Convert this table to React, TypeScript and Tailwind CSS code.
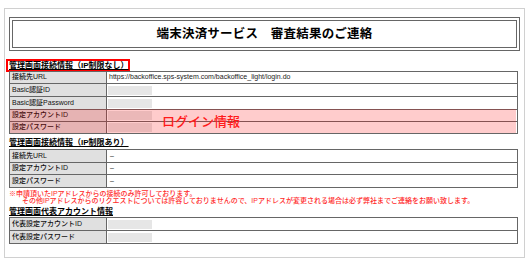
import React from "react"
import clsx from "clsx"

const font = { fontFamily: '"Liberation Sans", "Noto Sans CJK JP", sans-serif' }

const Blank = () => <div className="w-[44px] h-[9px] bg-[#e6e6e6]" />

type RowProps = { label: string; h: string; last?: boolean; children?: React.ReactNode }

const Row = ({ label, h, last, children }: RowProps) => (
  <div className={clsx("flex", h, !last && "border-b border-[#666]")}>
    <div className="w-[97px] shrink-0 bg-[#e0e0e0] border-r border-[#666] pl-[2px] flex items-center text-[7px] font-medium text-[#111]">
      {label}
    </div>
    <div className="flex-1 flex items-center pl-[1px] text-[7px] text-[#222]">{children}</div>
  </div>
)

const Heading = ({ children, className }: { children: React.ReactNode; className?: string }) => (
  <div className={clsx("text-[8px] font-bold text-black underline leading-none flex items-center", className)}>
    {children}
  </div>
)

export default function App() {
  return (
    <div className="w-[532px] h-[261px] bg-white pt-[8px] pl-[4px]" style={font}>
      <div className="w-[521px] h-[250px] border border-[#d0d0d0] px-[4px]">
        <div className="mt-[8px] w-[511px] h-[34px] border-[4px] border-double border-[#666] flex items-center justify-center">
          <span className="text-[12.5px] font-bold text-black tracking-[0.2px]">端末決済サービス　審査結果のご連絡</span>
        </div>

        <div className="mt-[8px] -ml-[3px] w-[124px] h-[13px] border-2 border-[#ff0000] pl-[1px] flex items-center">
          <Heading>管理画面接続情報（IP制限なし）</Heading>
        </div>

        <div className="relative -mt-[1px] w-[509px] border border-[#666]">
          <Row label="接続先URL" h="h-[12px]">
            <span className="pl-[1px]">https://backoffice.sps-system.com/backoffice_light/login.do</span>
          </Row>
          <Row label="Basic認証ID" h="h-[13px]">
            <Blank />
          </Row>
          <Row label="Basic認証Password" h="h-[13px]">
            <Blank />
          </Row>
          <Row label="設定アカウントID" h="h-[12px]">
            <Blank />
          </Row>
          <Row label="設定パスワード" h="h-[11px]" last>
            <Blank />
          </Row>
          <div className="absolute left-0 right-[1px] top-[37px] h-[24px] bg-[#ff0000]/20 flex items-center">
            <span className="ml-[152px] text-[13px] font-medium text-[#ff1a1a] leading-none">ログイン情報</span>
          </div>
        </div>

        <Heading className="mt-[3px] h-[12px]">管理画面接続情報（IP制限あり）</Heading>

        <div className="w-[509px] border border-[#666]">
          <Row label="接続先URL" h="h-[13px]">
            <span className="pl-[2px]">–</span>
          </Row>
          <Row label="設定アカウントID" h="h-[12px]">
            <span className="pl-[2px]">–</span>
          </Row>
          <Row label="設定パスワード" h="h-[12px]" last>
            <span className="pl-[2px]">–</span>
          </Row>
        </div>

        <div className="mt-[2px] text-[7px] leading-[7px] text-[#ff2a2a] font-medium">
          <div>※申請頂いたIPアドレスからの接続のみ許可しております。</div>
          <div className="pl-[13px]">
            その他IPアドレスからのリクエストについては許容しておりませんので、IPアドレスが変更される場合は必ず弊社までご連絡をお願い致します。
          </div>
        </div>

        <Heading className="mt-[2px] h-[11px]">管理画面代表アカウント情報</Heading>

        <div className="w-[509px] border border-[#666]">
          <Row label="代表設定アカウントID" h="h-[13px]">
            <Blank />
          </Row>
          <Row label="代表設定パスワード" h="h-[12px]" last>
            <Blank />
          </Row>
        </div>
      </div>
    </div>
  )
}
